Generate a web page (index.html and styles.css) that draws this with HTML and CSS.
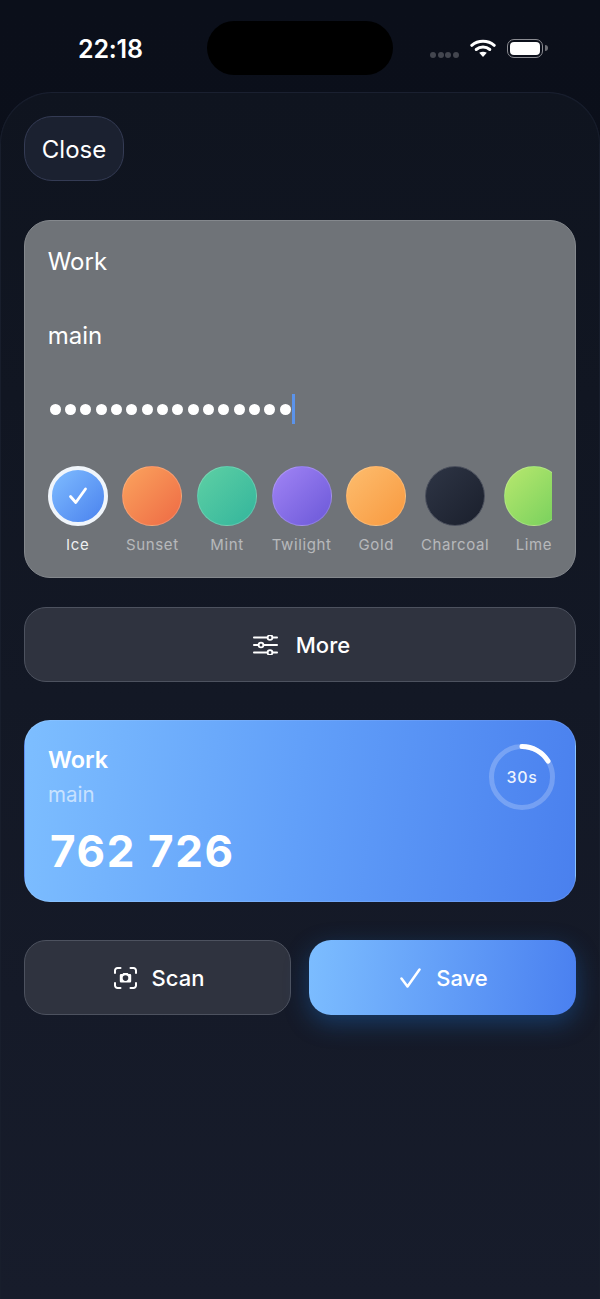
FILE: index.html
```html
<!DOCTYPE html>
<html lang="en">
<head>
<meta charset="utf-8">
<title>Add account</title>
<link rel="stylesheet" href="styles.css">
</head>
<body>
<div class="screen">
  <header class="status">
    <span class="time">22:18</span>
    <div class="island"></div>
    <div class="status-icons">
      <div class="signal"><i></i><i></i><i></i><i></i></div>
      <svg class="wifi" width="26" height="18" viewBox="0 0 26 18"><path d="M1.800 6.300C8 .9 18 .9 24.200 6.300" fill="none" stroke="#fff" stroke-width="3" stroke-linecap="round"/><path d="M6.200 10.500C10 7.300 16 7.300 19.800 10.500" fill="none" stroke="#fff" stroke-width="3" stroke-linecap="round"/><path d="M13 18 9.200 13.800C11.300 12.300 14.700 12.300 16.800 13.800Z" fill="#fff"/></svg>
      <div class="battery"><div class="battery-fill"></div></div>
    </div>
  </header>
  <main class="sheet">
    <button class="close">Close</button>
    <section class="form-card">
      <div class="field field-a">Work</div>
      <div class="field field-b">main</div>
      <div class="secret">
        <i></i><i></i><i></i><i></i><i></i><i></i><i></i><i></i><i></i><i></i><i></i><i></i><i></i><i></i><i></i><i></i><span class="caret"></span>
      </div>
      <div class="swatches">
        <div class="swatch swatch-on"><div class="dot ice"><svg width="20" height="18" viewBox="0 0 20 18"><path d="M2.500 9.500 7.800 15.500 17.500 2" fill="none" stroke="#fff" stroke-width="2.800" stroke-linecap="round" stroke-linejoin="round"/></svg></div><span>Ice</span></div>
        <div class="swatch"><div class="dot sunset"></div><span>Sunset</span></div>
        <div class="swatch"><div class="dot mint"></div><span>Mint</span></div>
        <div class="swatch"><div class="dot twilight"></div><span>Twilight</span></div>
        <div class="swatch"><div class="dot gold"></div><span>Gold</span></div>
        <div class="swatch"><div class="dot charcoal"></div><span>Charcoal</span></div>
        <div class="swatch"><div class="dot lime"></div><span>Lime</span></div>
      </div>
    </section>
    <button class="btn more">
      <svg width="25" height="20" viewBox="0 0 25 20" fill="none" stroke="#fff" stroke-width="1.800" stroke-linecap="round"><path d="M.9 2.500H14.400M19.600 2.500H24.100M.9 10H5.400M10.600 10H24.100M.9 17.500H14.400M19.600 17.500H24.100"/><circle cx="17" cy="2.500" r="2.400"/><circle cx="8" cy="10" r="2.400"/><circle cx="17" cy="17.500" r="2.400"/></svg>
      More
    </button>
    <section class="preview">
      <div class="preview-head">
        <div>
          <div class="p-title">Work</div>
          <div class="p-sub">main</div>
        </div>
        <div class="ring">
          <svg width="66" height="66" viewBox="0 0 66 66" fill="none"><circle cx="33" cy="33" r="30.500" stroke="rgba(255,255,255,.22)" stroke-width="5"/><path d="M33 2.500A30.500 30.500 0 0 1 59 17" stroke="#fff" stroke-width="5" stroke-linecap="round"/></svg>
          <span>30s</span>
        </div>
      </div>
      <div class="code">762 726</div>
    </section>
    <div class="actions">
      <button class="btn scan">
        <svg width="23" height="22" viewBox="0 0 23 22" fill="none" stroke="#fff" stroke-width="2" stroke-linecap="round"><path d="M1 6V3.500A2.500 2.500 0 0 1 3.500 1H6.500M16.500 1H19.500A2.500 2.500 0 0 1 22 3.500V6M22 16V18.500A2.500 2.500 0 0 1 19.500 21H16.500M6.500 21H3.500A2.500 2.500 0 0 1 1 18.500V16"/><path fill="#fff" stroke="none" fill-rule="evenodd" d="M8.500 7 9.300 6H13.700L14.500 7H16A1.200 1.200 0 0 1 17.200 8.200V14.300A1.200 1.200 0 0 1 16 15.500H7A1.200 1.200 0 0 1 5.800 14.300V8.200A1.200 1.200 0 0 1 7 7ZM11.500 8.300A2.800 2.800 0 1 0 11.500 13.900 2.800 2.800 0 0 0 11.500 8.300Z"/></svg>
        Scan
      </button>
      <button class="btn save">
        <svg width="21" height="20" viewBox="0 0 21 20" fill="none" stroke="#fff" stroke-width="2.500" stroke-linecap="round" stroke-linejoin="round"><path d="M1.500 10.500 7.500 18.500 19.500 1.500"/></svg>
        Save
      </button>
    </div>
  </main>
</div>
</body>
</html>
```
FILE: styles.css
```css
* { box-sizing: border-box; }
html, body { margin: 0; padding: 0; }
body { width: 600px; height: 1299px; overflow: hidden; background: #0b0f1a; font-family: Inter, "Liberation Sans", sans-serif; color: #fff; }
button { font-family: inherit; color: #fff; cursor: pointer; }
.screen { position: relative; width: 600px; height: 1299px; display: flex; flex-direction: column; background: linear-gradient(180deg, #0b0f1a 0%, #0c111c 100%); }

.status { height: 92px; flex: none; display: flex; align-items: flex-start; justify-content: space-between; padding: 35px 57px 0 78px; }
.time { font-size: 25px; line-height: 29px; font-weight: 600; letter-spacing: -0.2px; }
.island { position: absolute; left: 207px; top: 21px; width: 186px; height: 54px; border-radius: 27px; background: #000; }
.status-icons { display: flex; align-items: flex-start; gap: 11px; padding-top: 4px; }
.signal { display: flex; gap: 1.700px; margin-top: 13px; }
.signal i { width: 6px; height: 6px; border-radius: 50%; background: #43464f; }
.wifi { display: block; }
.battery { position: relative; width: 36px; height: 19px; border: 1.500px solid #8b8c92; border-radius: 7px; padding: 2px; }
.battery::after { content: ""; position: absolute; right: -5.500px; top: 5px; width: 3px; height: 6px; border-radius: 0 3px 3px 0; background: #6f7076; }
.battery-fill { width: 100%; height: 100%; background: #fff; border-radius: 4px; }

.sheet { flex: 1; display: flex; flex-direction: column; align-items: stretch; padding: 23px 24px 0; border-radius: 52px 52px 0 0; border-top: 1px solid #1a2030; background: linear-gradient(180deg, #0f141f 0%, #171c2b 100%); box-shadow: inset 1px 0 0 #181e2c, inset -1px 0 0 #181e2c; }

.close { align-self: flex-start; width: 100px; height: 65px; border-radius: 28px; border: 1px solid #343b54; background: #1b2130; font-size: 24px; font-weight: 400; padding: 2px 0 0; }

.form-card { margin-top: 39px; height: 358px; border-radius: 26px; border: 1px solid #84888d; background: #6f7378; padding: 0 23px 0 22.700px; }
.field { font-size: 24px; line-height: 30px; }
.field-a { margin-top: 26px; }
.field-b { margin-top: 44px; }
.secret { display: flex; align-items: center; height: 30px; margin-top: 43px; margin-left: 2px; gap: 4.330px; }
.secret i { width: 11px; height: 11px; border-radius: 50%; background: #fff; flex: none; }
.caret { width: 3px; height: 30px; background: #5b93ea; margin-left: -3px; }
.swatches { display: flex; gap: 14.670px; overflow: hidden; margin-top: 42px; }
.swatch { flex: none; min-width: 60px; display: flex; flex-direction: column; align-items: center; gap: 10px; font-size: 15px; line-height: 18px; color: rgba(255,255,255,.5); letter-spacing: .62px; }
.swatch-on { color: rgba(255,255,255,.9); }
.dot { width: 60px; height: 60px; border-radius: 50%; border: 1px solid rgba(255,255,255,.18); display: flex; align-items: center; justify-content: center; }
.ice { background: linear-gradient(135deg, #7fbcff, #4a82ee); border: 4px solid #f0f5fb; }
.sunset { background: linear-gradient(135deg, #fba45e, #ee6a44); }
.mint { background: linear-gradient(135deg, #5ed0a4, #33b59c); }
.twilight { background: linear-gradient(135deg, #a184f5, #6b58d8); }
.gold { background: linear-gradient(135deg, #fdbd6e, #f8993f); }
.charcoal { background: linear-gradient(135deg, #2e3545, #1a1f2c); border-color: #4a4f5c; }
.lime { background: linear-gradient(135deg, #b8e86e, #74cf5c); }

.btn { display: flex; align-items: center; justify-content: center; gap: 18px; border-radius: 22px; font-size: 22px; font-weight: 500; padding: 0 0 0 3px; }
.more { margin-top: 29px; height: 75px; border: 1px solid #4d525f; background: #2f333f; }

.preview { margin-top: 38px; height: 182px; border-radius: 26px; background: linear-gradient(97deg, #7dbeff 0%, #619ff9 50%, #4a80ee 100%); border: 1px solid rgba(255,255,255,.1); padding: 24px 20px 0 23px; }
.preview-head { display: flex; justify-content: space-between; align-items: flex-start; }
.p-title { font-size: 23.500px; line-height: 30px; font-weight: 600; }
.p-sub { margin-top: 7px; font-size: 20.500px; line-height: 26px; color: rgba(255,255,255,.6); }
.ring { position: relative; width: 66px; height: 66px; margin-top: -1px; }
.ring svg { display: block; }
.ring span { position: absolute; inset: 0; display: flex; align-items: center; justify-content: center; font-size: 16px; font-weight: 500; letter-spacing: .6px; color: rgba(255,255,255,.92); }
.code { margin-top: 14px; margin-left: 2px; font-size: 44px; line-height: 54px; font-weight: 700; letter-spacing: 1.600px; }

.actions { display: grid; grid-template-columns: 1fr 1fr; gap: 18px; margin-top: 38px; }
.actions .btn { height: 75px; gap: 15px; }
.scan { border: 1px solid #4d525f; background: #2f333f; }
.save { border: 0; background: linear-gradient(95deg, #7cbdff 0%, #4a80f0 100%); box-shadow: 0 8px 24px rgba(30,120,220,.35); }
```
